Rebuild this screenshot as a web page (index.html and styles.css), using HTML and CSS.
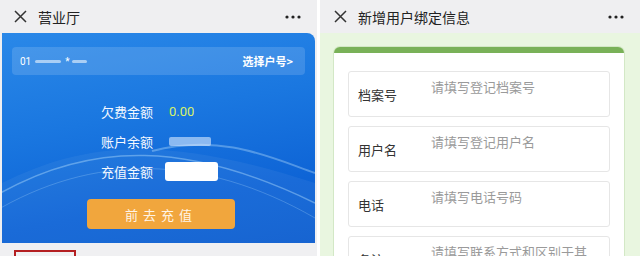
FILE: index.html
```html
<!DOCTYPE html>
<html lang="zh">
<head>
<meta charset="utf-8">
<link rel="stylesheet" href="styles.css">
</head>
<body>
<div class="screen">
  <section class="panel left">
    <header class="bar">
      <svg class="close" width="13" height="13" viewBox="0 0 13 13"><path d="M1 1 L12 12 M12 1 L1 12" stroke="#333" stroke-width="1.5" fill="none"/></svg>
      <span class="title">营业厅</span>
      <svg class="more" width="16" height="4" viewBox="0 0 16 4"><circle cx="2" cy="2" r="1.6" fill="#222"/><circle cx="8" cy="2" r="1.6" fill="#222"/><circle cx="14" cy="2" r="1.6" fill="#222"/></svg>
    </header>
    <div class="card">
      <svg class="waves" viewBox="0 0 313 210" preserveAspectRatio="none">
        <path d="M0 150 C80 110 160 100 313 150 L313 210 L0 210 Z" fill="rgba(255,255,255,0.05)"/>
        <path d="M-10 165 C90 105 190 110 313 170" stroke="rgba(190,230,255,0.4)" stroke-width="1.5" fill="none"/>
        <path d="M-10 180 C90 120 200 120 313 185" stroke="rgba(190,230,255,0.25)" stroke-width="1" fill="none"/>
        <path d="M150 118 C220 100 270 125 313 140" stroke="rgba(200,235,255,0.35)" stroke-width="2" fill="none"/>
      </svg>
      <div class="account">
        <span class="acct-no">01 <i class="blur b1"></i> *<i class="blur b2"></i></span>
        <span class="choose">选择户号&gt;</span>
      </div>
      <div class="rows">
        <div class="row"><span class="lbl">欠费金额</span><span class="val owe">0.00</span></div>
        <div class="row"><span class="lbl">账户余额</span><span class="val"><i class="blur b3"></i></span></div>
        <div class="row"><span class="lbl">充值金额</span><span class="input"></span></div>
      </div>
      <button class="pay">前去充值</button>
    </div>
    <div class="below"><span class="redbox"></span></div>
  </section>
  <section class="panel right">
    <header class="bar">
      <svg class="close" width="13" height="13" viewBox="0 0 13 13"><path d="M1 1 L12 12 M12 1 L1 12" stroke="#333" stroke-width="1.5" fill="none"/></svg>
      <span class="title">新增用户绑定信息</span>
      <svg class="more" width="16" height="4" viewBox="0 0 16 4"><circle cx="2" cy="2" r="1.6" fill="#222"/><circle cx="8" cy="2" r="1.6" fill="#222"/><circle cx="14" cy="2" r="1.6" fill="#222"/></svg>
    </header>
    <div class="green">
      <div class="form">
        <div class="field"><span class="flbl">档案号</span><span class="ph">请填写登记档案号</span></div>
        <div class="field"><span class="flbl">用户名</span><span class="ph">请填写登记用户名</span></div>
        <div class="field"><span class="flbl">电话</span><span class="ph">请填写电话号码</span></div>
        <div class="field"><span class="flbl">备注</span><span class="ph">请填写联系方式和区别于其</span></div>
      </div>
    </div>
  </section>
</div>
</body>
</html>
```

FILE: styles.css
```css
* { box-sizing: border-box; margin: 0; padding: 0; }
html, body { width: 640px; height: 256px; overflow: hidden; background: #fff; }
body { font-family: "Noto Sans CJK SC", "Noto Sans", sans-serif; }
.screen { display: flex; gap: 3px; width: 640px; height: 256px; }
.panel { display: flex; flex-direction: column; height: 256px; overflow: hidden; }
.left { width: 317px; background: #efeff1; }
.right { width: 320px; background: #efeff1; }
.bar { height: 33px; flex: none; display: flex; align-items: center; padding: 0 16px 0 14px; background: #efeff1; color: #222; }
.close { flex: none; margin-right: 11px; }
.title { font-size: 14px; flex: 1; color: #222; }
.more { flex: none; }
.card {
  position: relative; margin: 0 2px 0 2px; height: 210px; flex: none;
  background: linear-gradient(170deg, #2a88e8 0%, #1a77e0 40%, #0e64d6 75%, #0b5ccf 100%);
  border-top-right-radius: 8px; overflow: hidden;
}
.waves { position: absolute; left: 0; top: 0; width: 100%; height: 100%; }
.account {
  position: relative; margin: 14px 10px 0 10px; height: 28px; border-radius: 4px;
  background: rgba(255,255,255,0.14); display: flex; align-items: center; justify-content: space-between;
  padding: 0 12px 0 8px; color: #fff; font-size: 11px;
}
.acct-no { display: flex; align-items: center; gap: 2px; font-family: "Roboto", sans-serif; font-size: 10px; }
.blur { display: inline-block; height: 3px; border-radius: 2px; background: rgba(255,255,255,0.55); }
.b1 { width: 26px; margin: 0 2px; }
.b2 { width: 15px; }
.b3 { width: 42px; height: 9px; background: rgba(220,235,255,0.6); }
.choose { font-weight: bold; font-size: 11px; }
.rows { position: relative; display: flex; flex-direction: column; gap: 9px; padding: 26px 0 0 99px; }
.row { display: flex; align-items: center; height: 21px; color: #f4f8ff; font-size: 13px; }
.lbl { width: 68px; }
.owe { color: #d8f26a; font-family: "Roboto", sans-serif; font-size: 13px; }
.val { display: flex; align-items: center; }
.input { width: 53px; height: 19px; background: #fff; border-radius: 3px; margin-left: -4px; }
.pay {
  position: relative; display: block; margin: 17px 0 0 85px; width: 148px; height: 30px;
  border: none; border-radius: 4px; background: #f1a63d; color: #fff4e6;
  font-family: "Noto Sans CJK SC", sans-serif; font-size: 13px; letter-spacing: 5px;
}
.below { flex: 1; background: #f0f0f2; padding: 7px 0 0 14px; }
.redbox { display: block; width: 62px; height: 20px; border: 2px solid #b41f22; }
.green { flex: 1; background: #e9f6e0; padding: 14px 16px 0 14px; }
.form {
  background: #fff; border-top: 6px solid #79b158; border-radius: 6px 6px 0 0;
  box-shadow: 0 0 0 1px #d3e8c6; padding: 18px 14px 0 14px;
  display: flex; flex-direction: column; gap: 9px; height: 240px;
}
.field { height: 46px; flex: none; border: 1px solid #e6e6e6; border-radius: 3px; display: flex; align-items: center; padding: 0 0 0 9px; font-size: 13px; }
.flbl { width: 73px; color: #333; }
.ph { color: #9a9a9a; white-space: nowrap; overflow: hidden; margin-top: -16px; }
```
